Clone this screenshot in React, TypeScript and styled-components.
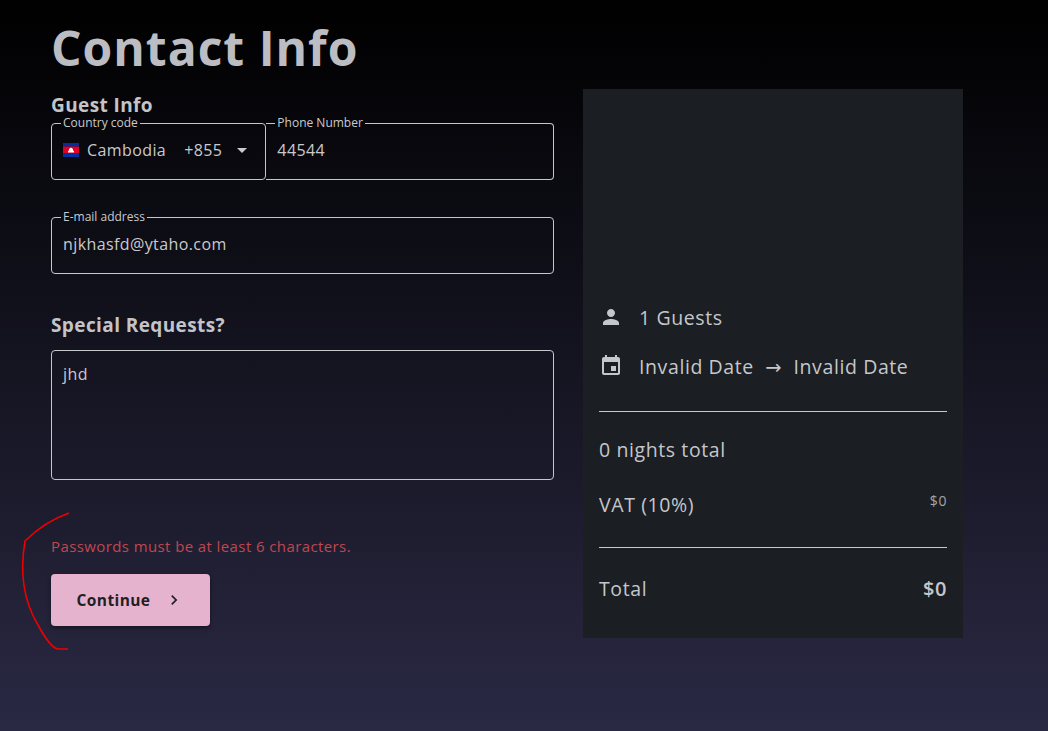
import React from "react";
import styled, { createGlobalStyle } from "styled-components";

const G = createGlobalStyle`
  html, body { margin: 0; padding: 0; }
  body { font-family: "Open Sans", "DejaVu Sans", sans-serif; background: linear-gradient(180deg, #000 0%, #0c0c14 30%, #1d1c2e 70%, #2a2944 100%); min-height: 731px; color: #c9cacd; overflow: hidden; letter-spacing: 0.4px; }
`;

const Page = styled.div`
  position: relative; width: 1048px; height: 731px; box-sizing: border-box; padding: 20px 0 0 51px;
`;
const Title = styled.h1`
  margin: 0; font-size: 48px; line-height: 56px; font-weight: 700; color: #bcbdc2; letter-spacing: 1px;
`;
const Body = styled.div`
  display: flex; gap: 29px; margin-top: 13px;
`;
const Left = styled.div`
  width: 503px; display: flex; flex-direction: column; margin-top: 3px;
`;
const H2 = styled.h2`
  margin: 0; font-size: 19px; font-weight: 700; color: #c3c4c8; line-height: 26px;
`;
const Fieldset = styled.fieldset<{ $w?: string; $h?: number }>`
  margin: 0; padding: 0 11px; border: 1px solid #c6c7cb; border-radius: 4px;
  height: ${p => p.$h ?? 62}px; box-sizing: border-box; flex: ${p => p.$w ?? "1"};
  display: flex; align-items: ${p => (p.$h ? "flex-start" : "center")};
  font-size: 16px; color: #c9cacd;
  & > legend { font-size: 12px; padding: 0 2px; margin-left: -2px; color: #c9cacd; line-height: 10px; letter-spacing: 0; }
`;
const Row = styled.div<{ $mt?: number }>`
  display: flex; margin-top: ${p => p.$mt ?? 0}px;
  & > fieldset + fieldset { border-left: none; border-top-left-radius: 0; border-bottom-left-radius: 0; }
`;
const Country = styled.div`
  display: flex; align-items: center; gap: 8px; width: 100%; margin-top: -8px;
`;
const Val = styled.div<{ $pt?: number }>`
  margin-top: ${p => p.$pt ?? -8}px;
`;
const Err = styled.div`
  color: #c0474f; font-size: 15px; margin-top: 56px;
`;
const Button = styled.button`
  margin-top: 18px; width: 159px; height: 52px; border: none; border-radius: 4px; background: #e6b3cf;
  color: #1f1f24; font-family: inherit; font-weight: 700; font-size: 15.5px; letter-spacing: 0.4px; display: flex; align-items: center; justify-content: center; gap: 14px;
  box-shadow: 0 2px 4px rgba(0,0,0,.4);
`;
const Panel = styled.div`
  width: 380px; height: 549px; background: #1b1e22; box-sizing: border-box; padding: 215px 16px 0 16px;
  font-size: 19.5px; color: #c6c7ca; letter-spacing: 0.6px;
`;
const InfoRow = styled.div<{ $mt?: number }>`
  display: flex; align-items: center; gap: 16px; margin-top: ${p => p.$mt ?? 0}px; height: 26px;
`;
const Hr = styled.div<{ $mt: number }>`
  height: 1px; background: #c8c9cc; margin-top: ${p => p.$mt}px;
`;
const Line = styled.div<{ $mt: number }>`
  display: flex; justify-content: space-between; align-items: flex-start; margin-top: ${p => p.$mt}px;
  & > small { font-size: 14px; color: #a4a6aa; }
  & > b { font-weight: 600; font-size: 20px; }
`;

const Flag = () => (
  <svg width="16" height="14" viewBox="0 0 16 14">
    <rect width="16" height="3.5" fill="#032ea1" />
    <rect y="3.5" width="16" height="7" fill="#e00025" />
    <rect y="10.5" width="16" height="3.5" fill="#032ea1" />
    <path d="M5 9.5h6v-1.3l-1-1v-1.2l-2-1.5-2 1.5v1.2l-1 1z" fill="#fff" />
  </svg>
);

export default function App() {
  return (
    <>
      <G />
      <Page>
        <Title>Contact Info</Title>
        <Body>
          <Left>
            <H2>Guest Info</H2>
            <Row $mt={0}>
              <Fieldset $w="0 0 209px">
                <legend>Country code</legend>
                <Country>
                  <Flag />
                  <span>Cambodia</span>
                  <span style={{ marginLeft: 10 }}>+855</span>
                  <svg width="24" height="24" viewBox="0 0 24 24"><path d="M7 10l5 5 5-5z" fill="#c9cacd" /></svg>
                </Country>
              </Fieldset>
              <Fieldset>
                <legend>Phone Number</legend>
                <Val>44544</Val>
              </Fieldset>
            </Row>
            <Row $mt={32}>
              <Fieldset>
                <legend>E-mail address</legend>
                <Val>njkhasfd@ytaho.com</Val>
              </Fieldset>
            </Row>
            <H2 style={{ marginTop: 38 }}>Special Requests?</H2>
            <Row $mt={12}>
              <Fieldset $h={130} as="div" style={{ paddingTop: 12 }}>
                <Val $pt={0}>jhd</Val>
              </Fieldset>
            </Row>
            <Err>Passwords must be at least 6 characters.</Err>
            <Button>Continue
              <svg width="20" height="20" viewBox="0 0 24 24"><path d="M10 6L8.6 7.4 13.2 12l-4.6 4.6L10 18l6-6z" fill="#1f1f24" /></svg>
            </Button>
          </Left>
          <Panel>
            <InfoRow>
              <svg width="24" height="24" viewBox="0 0 24 24"><path d="M12 12c2.2 0 4-1.8 4-4s-1.8-4-4-4-4 1.8-4 4 1.8 4 4 4zm0 2c-2.7 0-8 1.3-8 4v2h16v-2c0-2.7-5.3-4-8-4z" fill="#c6c7ca" /></svg>
              <span>1 Guests</span>
            </InfoRow>
            <InfoRow $mt={23}>
              <svg width="24" height="24" viewBox="0 0 24 24"><path d="M17 12h-5v5h5v-5zM16 1v2H8V1H6v2H5c-1.1 0-2 .9-2 2v14c0 1.1.9 2 2 2h14c1.1 0 2-.9 2-2V5c0-1.1-.9-2-2-2h-1V1h-2zm3 18H5V8h14v11z" fill="#c6c7ca" /></svg>
              <span>Invalid Date&nbsp;&nbsp;→&nbsp;&nbsp;Invalid Date</span>
            </InfoRow>
            <Hr $mt={32} />
            <Line $mt={24}><span>0 nights total</span></Line>
            <Line $mt={28}><span>VAT (10%)</span><small>$0</small></Line>
            <Hr $mt={29} />
            <Line $mt={27}><span>Total</span><b>$0</b></Line>
          </Panel>
        </Body>
        <svg style={{ position: "absolute", left: 0, top: 500, pointerEvents: "none" }} width="80" height="160" viewBox="0 0 80 160">
          <path d="M69 13 C55 18 40 26 25 41 C20 70 23 100 38 125 C45 138 52 148 58 149 L68 149" stroke="#e00" strokeWidth="1.6" fill="none" />
        </svg>
      </Page>
    </>
  );
}
